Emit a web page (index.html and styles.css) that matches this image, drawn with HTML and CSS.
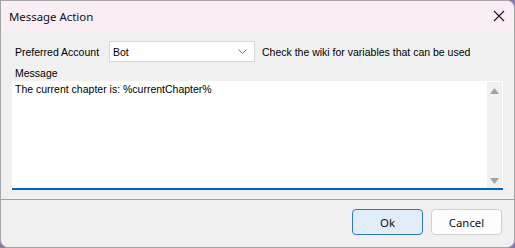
FILE: index.html
```html
<!DOCTYPE html>
<html>
<head>
<meta charset="utf-8">
<link rel="stylesheet" href="styles.css">
</head>
<body>
<div class="window">
  <div class="titlebar">
    <span class="title">Message Action</span>
    <svg class="close" width="12" height="12" viewBox="0 0 12 12"><path d="M1 1 L11 11 M11 1 L1 11" stroke="#1a1a1a" stroke-width="1.1" fill="none"/></svg>
  </div>
  <div class="content">
    <div class="row">
      <span class="label">Preferred Account</span>
      <div class="select"><span>Bot</span>
        <svg width="9" height="5" viewBox="0 0 9 5"><path d="M0.5 0.5 L4.5 4.5 L8.5 0.5" stroke="#777" stroke-width="1" fill="none"/></svg>
      </div>
      <span class="hint">Check the wiki for variables that can be used</span>
    </div>
    <div class="label msg">Message</div>
    <div class="textbox">
      <div class="text">The current chapter is: %currentChapter%</div>
      <div class="scroll">
        <svg width="9" height="6" viewBox="0 0 9 6"><path d="M4.5 0 L9 6 L0 6 Z" fill="#a3a3a3"/></svg>
        <svg width="9" height="6" viewBox="0 0 9 6"><path d="M0 0 L9 0 L4.5 6 Z" fill="#a3a3a3"/></svg>
      </div>
    </div>
  </div>
  <div class="footer">
    <button class="btn ok">Ok</button>
    <button class="btn">Cancel</button>
  </div>
</div>
</body>
</html>
```
FILE: styles.css
```css
html, body { margin: 0; padding: 0; background: #8a7aa8; }
.window {
  width: 513px; height: 246px;
  border: 1px solid #a4a4a4;
  border-radius: 0 8px 8px 8px;
  background: #f0f0f0;
  overflow: hidden;
  display: flex; flex-direction: column;
}
.titlebar {
  height: 30px; background: #f8eef4;
  display: flex; align-items: center; justify-content: space-between;
  padding: 0 9px 0 8px;
  font-family: "Noto Sans", sans-serif; font-size: 11.4px; color: #111;
}
.content {
  padding: 10px 11px 0 11px;
  font-family: "Liberation Sans", Arial, sans-serif; font-size: 10.5px; color: #000;
  height: 158px;
  border-bottom: 1px solid #a0a0a0;
}
.row { display: flex; align-items: center; height: 21px; }
.label { padding-left: 3px; }
.row .label { width: 94px; }
.select {
  background: #fff; border: 1px solid #d9d9d9;
  display: flex; align-items: center; justify-content: space-between;
  padding: 0 7px 0 3px; box-sizing: border-box; width: 146px; height: 21px;
}
.hint { margin-left: 7px; }
.msg { margin-top: 4px; height: 15px; line-height: 15px; }
.textbox {
  height: 107px; background: #fff;
  border-bottom: 2px solid #0067c0;
  display: flex; justify-content: space-between;
}
.text { padding: 2px 3px; }
.scroll {
  width: 16px; background: #f0f0f0; margin-top: 1px;
  display: flex; flex-direction: column; justify-content: space-between; align-items: center;
  padding: 6px 0 4px; box-sizing: border-box; border-right: 1px solid #fff;
}
.footer {
  flex: 1; display: flex; justify-content: flex-end; align-items: flex-start;
  padding: 9px 12px 0 0; gap: 8px;
}
.btn {
  width: 71px; height: 26px; border-radius: 4px;
  border: 1px solid #d0d0d0; background: #fdfdfd;
  font-family: "Noto Sans", sans-serif; font-size: 11.4px; color: #111; padding: 0;
}
.btn.ok { background: #e0ecf8; border-color: #2b79c8; }
```
